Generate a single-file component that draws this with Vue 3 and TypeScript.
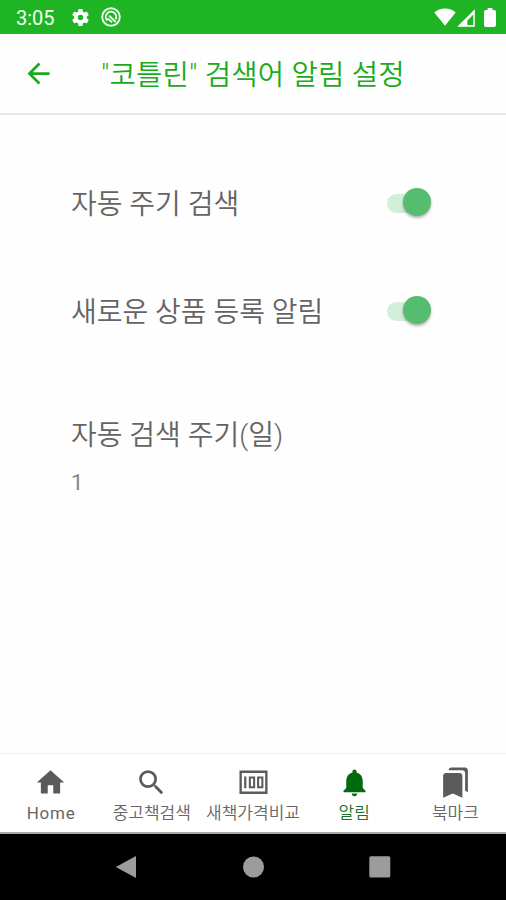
<script setup lang="ts">
import { ref } from 'vue'

interface Tab {
  id: string
  label: string
}

const tabs: Tab[] = [
  { id: 'home', label: 'Home' },
  { id: 'search', label: '중고책검색' },
  { id: 'compare', label: '새책가격비교' },
  { id: 'alarm', label: '알림' },
  { id: 'bookmark', label: '북마크' },
]
const active = ref('alarm')
const autoSearch = ref(true)
const newItemAlarm = ref(true)
</script>

<template>
  <div class="screen">
    <div class="status">
      <span class="clock">3:05</span>
      <svg class="gear" viewBox="0 0 24 24"><path d="M19.14 12.94c.04-.3.06-.61.06-.94 0-.32-.02-.64-.07-.94l2.03-1.58c.18-.14.23-.41.12-.61l-1.92-3.32c-.12-.22-.37-.29-.59-.22l-2.39.96c-.5-.38-1.03-.7-1.62-.94l-.36-2.54c-.04-.24-.24-.41-.48-.41h-3.84c-.24 0-.43.17-.47.41l-.36 2.54c-.59.24-1.13.57-1.62.94l-2.39-.96c-.22-.08-.47 0-.59.22L2.74 8.87c-.12.21-.08.47.12.61l2.03 1.58c-.05.3-.09.63-.09.94s.02.64.07.94l-2.03 1.58c-.18.14-.23.41-.12.61l1.92 3.32c.12.22.37.29.59.22l2.39-.96c.5.38 1.03.7 1.62.94l.36 2.54c.05.24.24.41.48.41h3.84c.24 0 .44-.17.47-.41l.36-2.54c.59-.24 1.13-.56 1.62-.94l2.39.96c.22.08.47 0 .59-.22l1.92-3.32c.12-.22.07-.47-.12-.61l-2.01-1.58zM12 15.1A3.1 3.1 0 1 1 12 8.9a3.1 3.1 0 0 1 0 6.2z" /></svg>
      <svg class="debug" viewBox="0 0 20 20"><circle cx="10" cy="10" r="8.8" /><path d="M6.3 13.6A5.2 5.2 0 1 1 14.6 12.4M8.2 8.6l6.4 6.4M6.6 11.4l4.4 3.8" /></svg>
      <span class="spacer"></span>
      <svg class="wifi" viewBox="0 0 22 18"><path d="M.3 4.4C5.8-.9 16.2-.9 21.7 4.4L11 17.8z" /></svg>
      <svg class="signal" viewBox="0 0 18 18"><path fill-rule="evenodd" d="M17.8.2v17.6H.2zM16.3 5.4l-6 6.4v4.2h6z" /></svg>
      <svg class="battery" viewBox="0 0 12 19"><path d="M3.6 0h4.8v2H10a2 2 0 0 1 2 2v13a2 2 0 0 1-2 2H2a2 2 0 0 1-2-2V4a2 2 0 0 1 2-2h1.6z" /></svg>
    </div>
    <header class="bar">
      <svg class="back" viewBox="0 0 24 24"><path d="M20 11H7.83l5.59-5.59L12 4l-8 8 8 8 1.41-1.41L7.83 13H20v-2z" /></svg>
      <h1>"코틀린" 검색어 알림 설정</h1>
    </header>
    <main>
      <div class="row">
        <span class="label">자동 주기 검색</span>
        <button class="toggle" :class="{ on: autoSearch }" @click="autoSearch = !autoSearch"><i></i></button>
      </div>
      <div class="row second">
        <span class="label">새로운 상품 등록 알림</span>
        <button class="toggle" :class="{ on: newItemAlarm }" @click="newItemAlarm = !newItemAlarm"><i></i></button>
      </div>
      <div class="period">
        <div class="label">자동 검색 주기(일)</div>
        <div class="value">1</div>
      </div>
    </main>
    <nav class="tabs">
      <div v-for="t in tabs" :key="t.id" class="tab" :class="{ active: t.id === active }" @click="active = t.id">
        <svg viewBox="0 0 24 24">
          <path v-if="t.id === 'home'" d="M10 20v-6h4v6h5v-8h3L12 3 2 12h3v8z" />
          <path v-else-if="t.id === 'search'" d="M15.5 14h-.79l-.28-.27A6.471 6.471 0 0 0 16 9.5 6.5 6.5 0 1 0 9.5 16c1.61 0 3.09-.59 4.23-1.57l.27.28v.79l5 4.99L20.49 19l-4.99-5zm-6 0C7.01 14 5 11.99 5 9.5S7.01 5 9.5 5 14 7.01 14 9.5 11.99 14 9.5 14z" />
          <path v-else-if="t.id === 'compare'" fill-rule="evenodd" d="M1.8 3.3h20.4v17H1.8zM3.5 5v13.6h17V5zM5.2 7.6h1.6v8.6H5.2zM8.6 7.6h4.6v8.6H8.6zM10.1 9.1v5.6h1.6V9.1zM14.6 7.6h4.6v8.6h-4.6zM16.1 9.1v5.6h1.6V9.1z" />
          <path v-else-if="t.id === 'alarm'" d="M12 22c1.1 0 2-.9 2-2h-4c0 1.1.89 2 2 2zm6-6v-5c0-3.07-1.64-5.64-4.5-6.32V4c0-.83-.67-1.5-1.5-1.5s-1.5.67-1.5 1.5v.68C7.63 5.36 6 7.92 6 11v5l-2 2v1h16v-1l-2-2z" />
          <path v-else d="M19 18l2 1V3c0-1.1-.9-2-2-2H8.99C7.89 1 7 1.9 7 3h10c1.1 0 2 .9 2 2v13zM15 5H5c-1.1 0-2 .9-2 2v16l7-3 7 3V7c0-1.1-.9-2-2-2z" />
        </svg>
        <span :class="{ latin: t.id === 'home' }">{{ t.label }}</span>
      </div>
    </nav>
    <div class="system">
      <svg viewBox="0 0 24 24"><path d="M21 1v22L.8 12z" /></svg>
      <svg viewBox="0 0 24 24"><circle cx="12.5" cy="12" r="10.5" /></svg>
      <svg viewBox="0 0 24 24"><rect x="1.3" y="1.2" width="21" height="21.3" rx="1.5" /></svg>
    </div>
  </div>
</template>

<style>
body {
  margin: 0;
  background: #fff;
}
</style>

<style scoped>
.screen {
  width: 506px;
  height: 900px;
  display: flex;
  flex-direction: column;
  background: #fefefe;
  font-family: Roboto, "Noto Sans CJK KR", sans-serif;
  overflow: hidden;
}
.status {
  height: 34px;
  flex: none;
  box-sizing: border-box;
  padding: 0 10px 0 16px;
  display: flex;
  align-items: center;
  background: #1eb424;
  color: #f4fff4;
  fill: #fff;
}
.clock {
  width: 55px;
  font-size: 20px;
  line-height: 34px;
  padding-top: 2px;
}
.gear { width: 21px; height: 21px; margin-left: -1px; }
.debug { width: 20px; height: 20px; margin-left: 10px; }
.debug circle, .debug path { fill: none; stroke: #effcef; stroke-width: 1.9; }
.spacer { flex: 1; }
.wifi { width: 22px; height: 18px; }
.signal { width: 18px; height: 18px; margin: 1px 0 0 1px; }
.battery { width: 12px; height: 19px; margin-left: 9px; }
.bar {
  height: 79px;
  flex: none;
  display: flex;
  align-items: center;
  border-bottom: 2px solid #e7e7e7;
  box-sizing: content-box;
}
.back { width: 33px; height: 33px; margin-left: 22px; fill: #1aaa20; }
h1 {
  margin: 0 0 0 46px;
  padding-top: 2px;
  font-size: 28.7px;
  line-height: 40px;
  font-weight: 350;
  letter-spacing: 0.16px;
  color: #1aab20;
  white-space: nowrap;
}
main {
  flex: 1;
  padding: 67px 74px 0 71px;
}
.row {
  height: 42px;
  display: flex;
  align-items: center;
  justify-content: space-between;
}
.second { margin-top: 66px; }
.label {
  padding-top: 4px;
  font-size: 28px;
  line-height: 42px;
  font-weight: 350;
  color: #646464;
  white-space: nowrap;
}
.period { margin-top: 79px; }
.value {
  margin-top: 12px;
  font-size: 22px;
  line-height: 28px;
  color: #858585;
}
.toggle {
  width: 46px;
  height: 30px;
  padding: 0 0 0 1px;
  border: 0;
  background: none;
  display: flex;
  align-items: center;
}
.toggle::before {
  content: "";
  width: 38px;
  height: 19px;
  flex: none;
  border-radius: 10px;
  background: #d2efd9;
}
.toggle i {
  width: 28px;
  height: 28px;
  flex: none;
  margin-left: -38px;
  border-radius: 50%;
  background: #f4f4f4;
  box-shadow: 0 2px 3px rgba(0, 0, 0, 0.3);
}
.toggle.on i { margin-left: -22px; margin-top: -2px; background: #56bd70; }
.tabs {
  height: 78px;
  flex: none;
  display: flex;
  border-top: 1px solid #f1f1f1;
  border-bottom: 2px solid #a9a9a9;
  background: #fff;
}
.tab {
  flex: 1;
  display: flex;
  flex-direction: column;
  align-items: center;
  color: #666;
  fill: #5b5b5b;
}
.tab svg { width: 33px; height: 33px; margin-top: 12px; flex: none; }
.tab span {
  font-size: 17px;
  font-weight: 350;
  line-height: 24px;
  margin-top: 2px;
  white-space: nowrap;
}
.tab .latin { font-size: 17px; font-weight: 400; letter-spacing: 0.8px; padding-left: 1px; }
.tab.active { color: #1c7426; fill: #006b0c; }
.system {
  height: 66px;
  flex: none;
  display: flex;
  align-items: center;
  justify-content: center;
  gap: 102.5px;
  background: #000;
  fill: #9c9c9c;
}
.system svg { width: 24px; height: 24px; }
</style>
